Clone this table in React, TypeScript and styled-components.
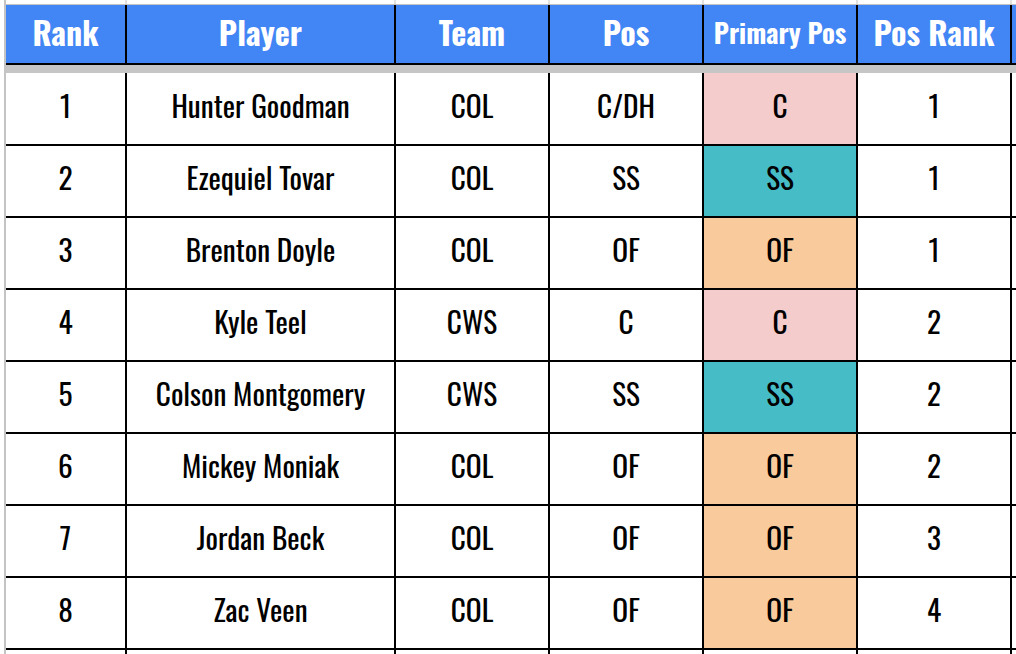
import React from "react";
import styled, { createGlobalStyle } from "styled-components";

const GlobalStyle = createGlobalStyle`
  html, body { margin: 0; padding: 0; background: #ffffff; }
  body { font-family: "Oswald", "Roboto Condensed", "Liberation Sans Narrow", sans-serif; }
`;

const COLS = "119px 267px 152px 152px 152px 152px 1fr";

const Page = styled.div`
  width: 1016px;
  height: 654px;
  overflow: hidden;
  display: flex;
  flex-direction: column;
`;

const TopStrip = styled.div`
  flex-shrink: 0;
  height: 4px;
  margin-left: 4px;
  border-left: 2px solid #c4c4c4;
  border-bottom: 1px solid #c4c4c4;
  display: grid;
  grid-template-columns: ${COLS};
  column-gap: 2px;
  background: #e1e1e1;
`;

const TopCell = styled.div`
  background: #ffffff;
`;

const Frame = styled.div`
  flex-shrink: 0;
  margin-left: 4px;
  border-left: 2px solid #c4c4c4;
  display: flex;
  flex-direction: column;
`;

const HeaderRow = styled.div`
  flex-shrink: 0;
  display: grid;
  grid-template-columns: ${COLS};
  column-gap: 2px;
  background: #000000;
  padding-bottom: 2px;
`;

const HeaderCell = styled.div<{ $small?: boolean }>`
  box-sizing: border-box;
  height: 58px;
  padding-bottom: 4px;
  background: #4285f4;
  color: #ffffff;
  font-family: "Oswald", "Roboto Condensed", sans-serif;
  font-weight: 700;
  font-size: ${(p) => (p.$small ? "26.67px" : "32px")};
  line-height: 1;
  display: flex;
  align-items: center;
  justify-content: center;
  white-space: nowrap;
  overflow: hidden;
`;

const FreezeBand = styled.div`
  flex-shrink: 0;
  height: 8px;
  background: #c6c6c6;
`;

const BodyGrid = styled.div`
  flex-shrink: 0;
  display: grid;
  grid-template-columns: ${COLS};
  grid-template-rows: 71px;
  grid-auto-rows: 70px;
  gap: 2px;
  background: #000000;
`;

const Cell = styled.div<{ $bg?: string }>`
  box-sizing: border-box;
  padding-bottom: 8px;
  background: ${(p) => p.$bg ?? "#ffffff"};
  color: #000000;
  font-family: "Oswald", "Roboto Condensed", sans-serif;
  font-weight: 400;
  font-size: 29.33px;
  line-height: 1;
  display: flex;
  align-items: center;
  justify-content: center;
  white-space: nowrap;
`;

const POS_COLORS: Record<string, string> = {
  C: "#f4cccc",
  SS: "#46bdc6",
  OF: "#f9cb9c",
};

type Row = {
  rank: number;
  player: string;
  team: string;
  pos: string;
  primary: string;
  posRank: number;
};

const rows: Row[] = [
  { rank: 1, player: "Hunter Goodman", team: "COL", pos: "C/DH", primary: "C", posRank: 1 },
  { rank: 2, player: "Ezequiel Tovar", team: "COL", pos: "SS", primary: "SS", posRank: 1 },
  { rank: 3, player: "Brenton Doyle", team: "COL", pos: "OF", primary: "OF", posRank: 1 },
  { rank: 4, player: "Kyle Teel", team: "CWS", pos: "C", primary: "C", posRank: 2 },
  { rank: 5, player: "Colson Montgomery", team: "CWS", pos: "SS", primary: "SS", posRank: 2 },
  { rank: 6, player: "Mickey Moniak", team: "COL", pos: "OF", primary: "OF", posRank: 2 },
  { rank: 7, player: "Jordan Beck", team: "COL", pos: "OF", primary: "OF", posRank: 3 },
  { rank: 8, player: "Zac Veen", team: "COL", pos: "OF", primary: "OF", posRank: 4 },
];

const headers = ["Rank", "Player", "Team", "Pos", "Primary Pos", "Pos Rank", ""];

export default function App() {
  return (
    <>
      <GlobalStyle />
      <Page>
        <TopStrip>
          {headers.map((_, i) => (
            <TopCell key={i} />
          ))}
        </TopStrip>
        <Frame>
          <HeaderRow>
            {headers.map((h, i) => (
              <HeaderCell key={i} $small={h === "Primary Pos"}>
                {h}
              </HeaderCell>
            ))}
          </HeaderRow>
          <FreezeBand />
          <BodyGrid>
            {rows.map((r) => (
              <React.Fragment key={r.rank}>
                <Cell>{r.rank}</Cell>
                <Cell>{r.player}</Cell>
                <Cell>{r.team}</Cell>
                <Cell>{r.pos}</Cell>
                <Cell $bg={POS_COLORS[r.primary]}>{r.primary}</Cell>
                <Cell>{r.posRank}</Cell>
                <Cell />
              </React.Fragment>
            ))}
            {headers.map((_, i) => (
              <Cell key={`e${i}`} />
            ))}
          </BodyGrid>
        </Frame>
      </Page>
    </>
  );
}
